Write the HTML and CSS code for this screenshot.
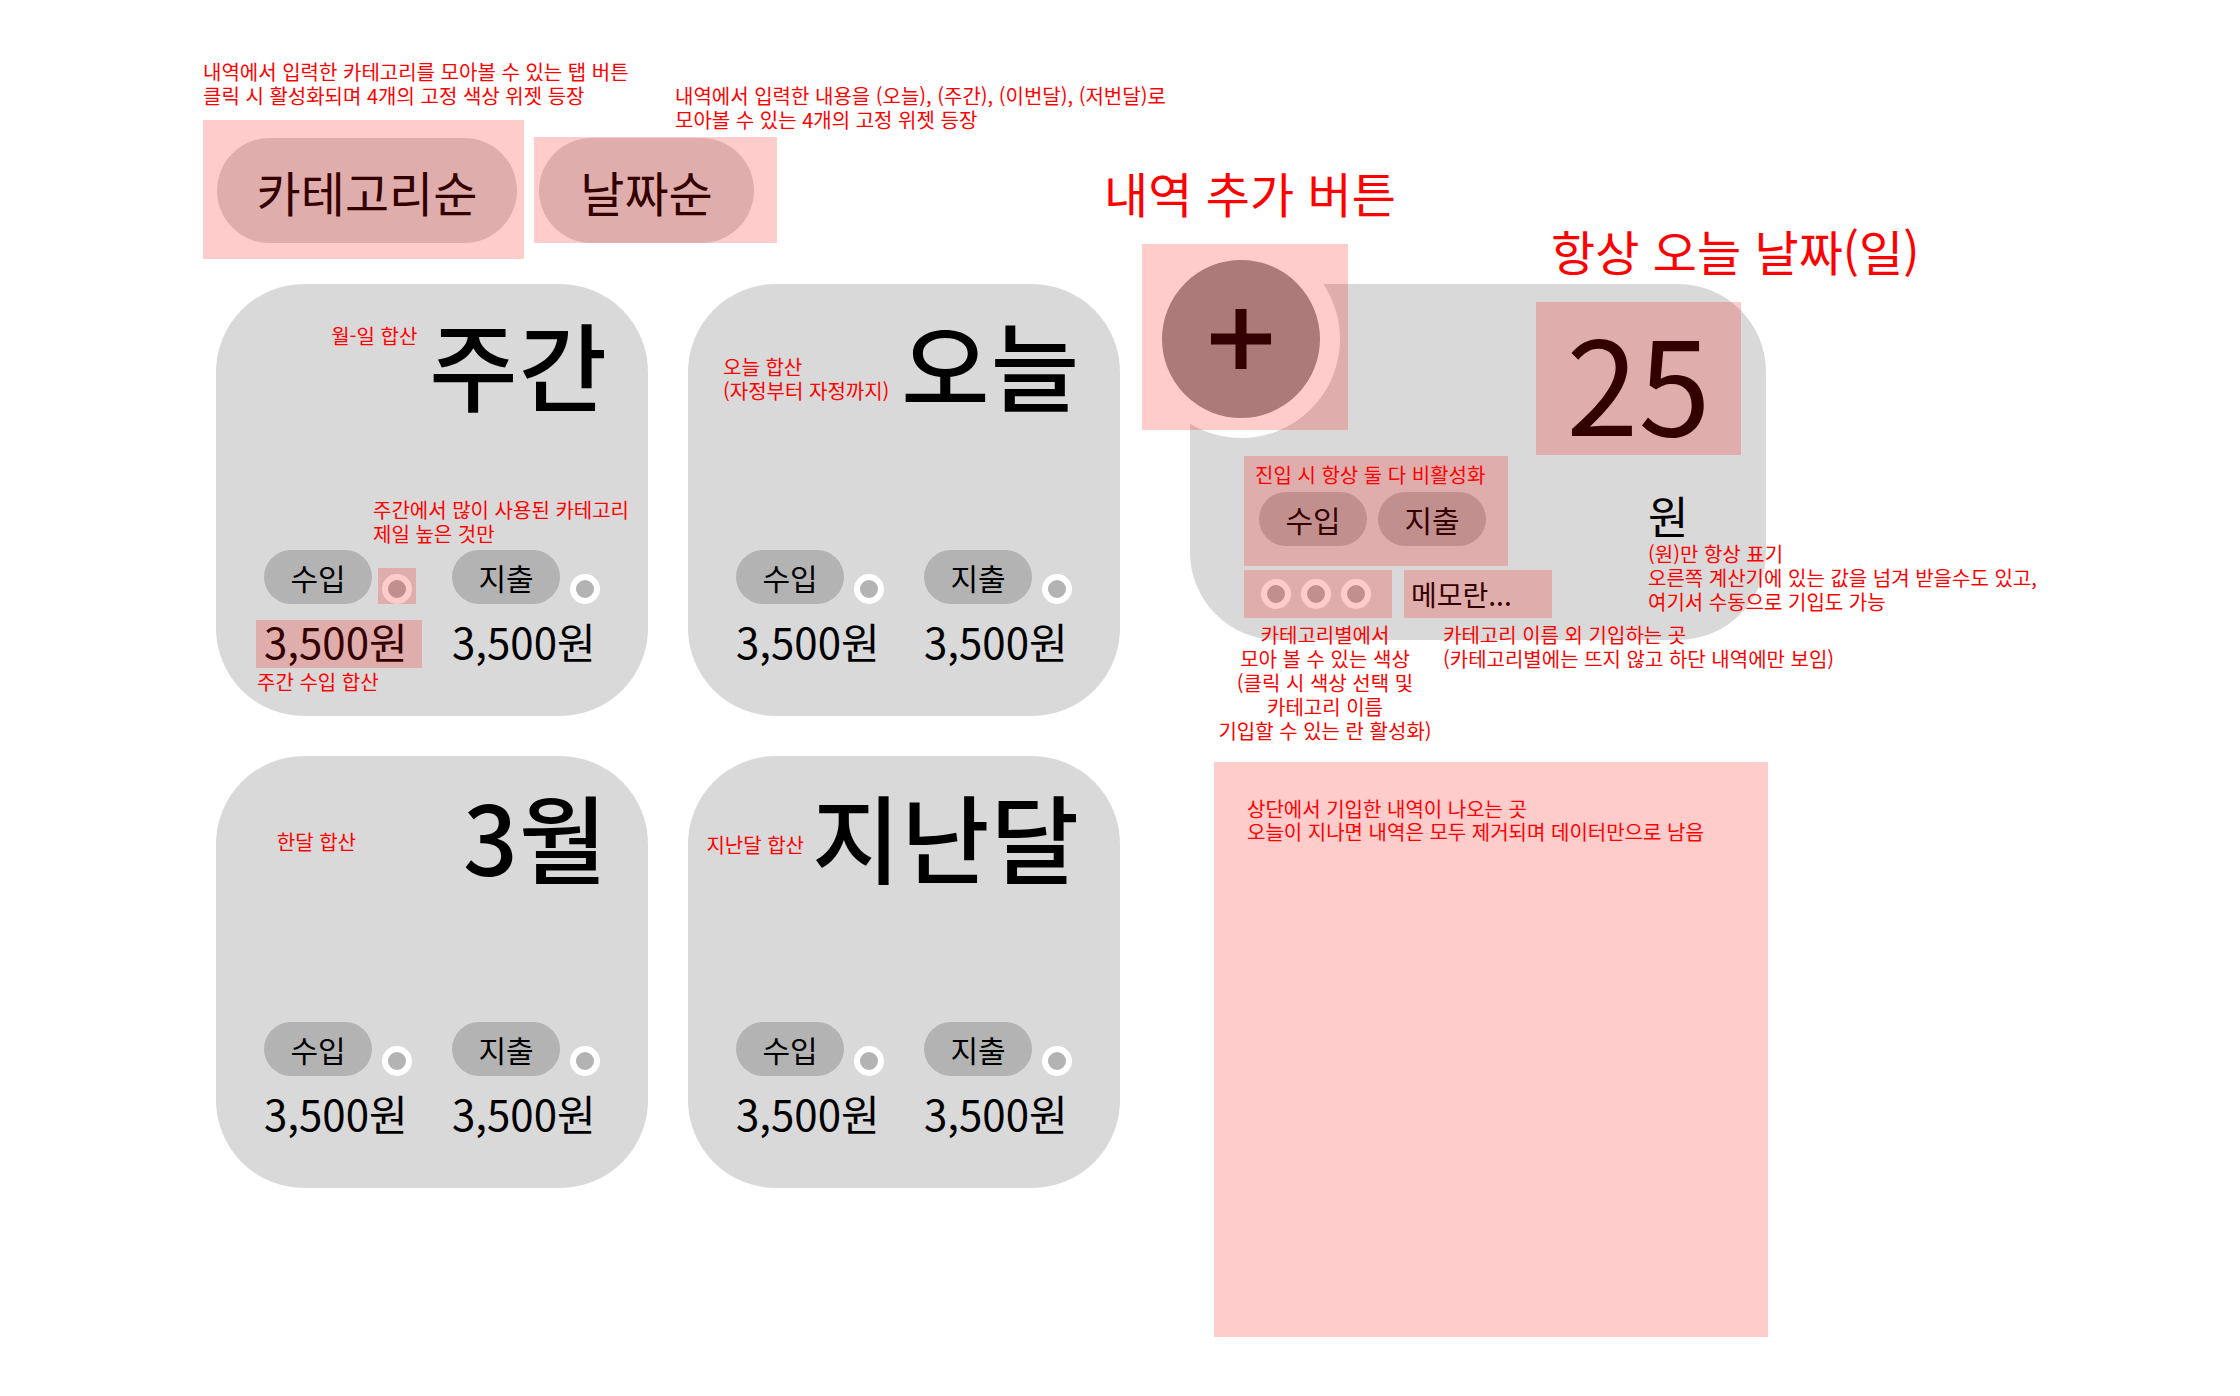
FILE: index.html
```html
<!DOCTYPE html>
<html lang="ko">
<head>
    <meta charset="UTF-8">
    <meta name="viewport" content="width=device-width, initial-scale=1.0">
    <title>가계부 - 화면 설계</title>
    <link rel="stylesheet" href="styles.css">
</head>
<body>
<div class="board">

    <section class="summary">
        <p class="note">내역에서 입력한 카테고리를 모아볼 수 있는 탭 버튼<br>클릭 시 활성화되며 4개의 고정 색상 위젯 등장</p>

        <div class="tabs">
            <button class="tab tab-category">카테고리순</button>
            <button class="tab tab-date">날짜순</button>
            <p class="note note-dates">내역에서 입력한 내용을 (오늘), (주간), (이번달), (저번달)로<br>모아볼 수 있는 4개의 고정 위젯 등장</p>
        </div>

        <div class="cards">
            <div class="card card-week">
                <div class="card-head">
                    <p class="note">월-일 합산</p>
                    <h2 class="card-title">주간</h2>
                </div>
                <div class="stats">
                    <p class="note note-top">주간에서 많이 사용된 카테고리<br>제일 높은 것만</p>
                    <div class="stat">
                        <div class="stat-top"><span class="pill">수입</span><span class="dot marked"></span></div>
                        <div class="amount marked">3,500원<span class="note note-sum">주간 수입 합산</span></div>
                    </div>
                    <div class="stat">
                        <div class="stat-top"><span class="pill">지출</span><span class="dot"></span></div>
                        <div class="amount">3,500원</div>
                    </div>
                </div>
            </div>

            <div class="card card-today">
                <div class="card-head">
                    <p class="note">오늘 합산<br>(자정부터 자정까지)</p>
                    <h2 class="card-title">오늘</h2>
                </div>
                <div class="stats">
                    <div class="stat">
                        <div class="stat-top"><span class="pill">수입</span><span class="dot"></span></div>
                        <div class="amount">3,500원</div>
                    </div>
                    <div class="stat">
                        <div class="stat-top"><span class="pill">지출</span><span class="dot"></span></div>
                        <div class="amount">3,500원</div>
                    </div>
                </div>
            </div>

            <div class="card card-month">
                <div class="card-head">
                    <p class="note">한달 합산</p>
                    <h2 class="card-title">3월</h2>
                </div>
                <div class="stats">
                    <div class="stat">
                        <div class="stat-top"><span class="pill">수입</span><span class="dot"></span></div>
                        <div class="amount">3,500원</div>
                    </div>
                    <div class="stat">
                        <div class="stat-top"><span class="pill">지출</span><span class="dot"></span></div>
                        <div class="amount">3,500원</div>
                    </div>
                </div>
            </div>

            <div class="card card-last">
                <div class="card-head">
                    <p class="note">지난달 합산</p>
                    <h2 class="card-title">지난달</h2>
                </div>
                <div class="stats">
                    <div class="stat">
                        <div class="stat-top"><span class="pill">수입</span><span class="dot"></span></div>
                        <div class="amount">3,500원</div>
                    </div>
                    <div class="stat">
                        <div class="stat-top"><span class="pill">지출</span><span class="dot"></span></div>
                        <div class="amount">3,500원</div>
                    </div>
                </div>
            </div>
        </div>
    </section>

    <section class="entry-area">
        <div class="callouts">
            <h2 class="callout callout-add">내역 추가 버튼</h2>
            <h2 class="callout callout-date">항상 오늘 날짜(일)</h2>
        </div>

        <div class="today-card">
            <div class="add-zone">
                <button class="add-btn" aria-label="내역 추가">
                    <svg width="60" height="60" viewBox="0 0 60 60">
                        <rect x="24.5" y="0" width="11" height="60" fill="#000"/>
                        <rect x="0" y="24.5" width="60" height="11" fill="#000"/>
                    </svg>
                </button>
            </div>

            <div class="date-box">25</div>

            <div class="today-row">
                <div class="entry">
                    <div class="toggle-box">
                        <p class="note">진입 시 항상 둘 다 비활성화</p>
                        <div class="toggle-pills">
                            <span class="pill">수입</span>
                            <span class="pill">지출</span>
                        </div>
                    </div>
                    <div class="entry-bottom">
                        <div class="color-box">
                            <span class="dot"></span><span class="dot"></span><span class="dot"></span>
                            <p class="note note-colors">카테고리별에서<br>모아 볼 수 있는 색상<br>(클릭 시 색상 선택 및<br>카테고리 이름<br>기입할 수 있는 란 활성화)</p>
                        </div>
                        <div class="memo-box">
                            메모란...
                            <p class="note note-memo">카테고리 이름 외 기입하는 곳<br>(카테고리별에는 뜨지 않고 하단 내역에만 보임)</p>
                        </div>
                    </div>
                </div>
                <div class="won-col">
                    <div class="won">원</div>
                    <p class="note">(원)만 항상 표기<br>오른쪽 계산기에 있는 값을 넘겨 받을수도 있고,<br>여기서 수동으로 기입도 가능</p>
                </div>
            </div>
        </div>

        <div class="history">
            <p class="note">상단에서 기입한 내역이 나오는 곳<br>오늘이 지나면 내역은 모두 제거되며 데이터만으로 남음</p>
        </div>
    </section>

</div>
</body>
</html>
```

FILE: styles.css
```css
body {
    margin: 0;
    background-color: #fff;
    color: #000;
    font-family: "Noto Sans CJK KR", sans-serif;
}
.board {
    display: flex;
    align-items: flex-start;
    padding: 60px 0 0 203px;
}
.note {
    margin: 0;
    color: #f00;
    font-size: 20px;
    line-height: 24px;
    white-space: nowrap;
}

/* 분홍 표시 영역 (설명용) */
.marked,
.tab,
.date-box,
.toggle-box,
.color-box,
.memo-box,
.add-zone {
    position: relative;
}
.marked::after,
.tab::after,
.date-box::after,
.toggle-box::after,
.color-box::after,
.memo-box::after,
.add-zone::after {
    content: "";
    position: absolute;
    inset: 0;
    background-color: rgba(255, 0, 0, 0.2);
    pointer-events: none;
}

/* 왼쪽: 탭 + 위젯 */
.summary {
    width: 939px;
    flex-shrink: 0;
}
.tabs {
    position: relative;
    display: flex;
    gap: 22px;
    margin: 30px 0 0 14px;
}
.tab {
    height: 105px;
    padding: 0;
    border: none;
    border-radius: 53px;
    background-color: #d9d9d9;
    color: #000;
    font-family: inherit;
    font-size: 48px;
}
.tab-category {
    width: 300px;
}
.tab-category::after {
    inset: -18px -7px -16px -14px;
}
.tab-date {
    width: 215px;
}
.tab-date::after {
    inset: -1px -23px 0 -5px;
}
.note-dates {
    position: absolute;
    left: 458px;
    top: -54px;
}
.cards {
    display: grid;
    grid-template-columns: repeat(2, 432px);
    grid-auto-rows: 432px;
    gap: 40px;
    margin: 41px 0 0 13px;
}
.card {
    display: flex;
    flex-direction: column;
    box-sizing: border-box;
    padding: 31px 40px 51px 48px;
    border-radius: 88px;
    background-color: #d9d9d9;
}
.card-head {
    display: flex;
    justify-content: flex-end;
    align-items: flex-start;
    gap: 12px;
}
.card-title {
    margin: 0;
    font-size: 96px;
    font-weight: 500;
    line-height: 96px;
    letter-spacing: 1px;
    white-space: nowrap;
}
.card-week .card-head .note { margin-top: 9px; }
.card-today .card-head .note { margin-top: 40px; }
.card-month .card-head .note { margin-top: 43px; margin-right: 95px; }
.card-last .card-head .note { margin-top: 46px; margin-right: -4px; }

.stats {
    position: relative;
    display: flex;
    gap: 40px;
    margin-top: auto;
}
.stat {
    width: 148px;
}
.stat-top {
    display: flex;
    align-items: flex-end;
    gap: 10px;
}
.pill {
    display: inline-flex;
    align-items: center;
    justify-content: center;
    width: 108px;
    height: 54px;
    border-radius: 27px;
    background-color: #b3b3b3;
    font-size: 30px;
}
.dot {
    display: inline-block;
    width: 30px;
    height: 30px;
    box-sizing: border-box;
    border: 6px solid #fff;
    border-radius: 50%;
    background-color: #b3b3b3;
}
.dot.marked::after {
    inset: -12px -10px -6px -10px;
}
.amount {
    margin-top: 13px;
    font-size: 42px;
    line-height: 48px;
    white-space: nowrap;
}
.amount.marked::after {
    inset: 3px -10px -3px -8px;
}
.note-top {
    position: absolute;
    left: 109px;
    bottom: calc(100% + 4px);
}
.note-sum {
    position: absolute;
    left: -7px;
    top: 53px;
}

/* 오른쪽: 내역 추가 */
.entry-area {
    width: 780px;
    flex-shrink: 0;
}
.callouts {
    display: grid;
    grid-template-columns: 409px auto;
    margin-top: 106px;
}
.callout {
    margin: 0;
    color: #f00;
    font-size: 48px;
    font-weight: 400;
    line-height: 53px;
    white-space: nowrap;
}
.callout-add {
    margin-left: -38px;
}
.callout-date {
    margin-top: 58px;
}
.today-card {
    position: relative;
    display: flex;
    flex-direction: column;
    width: 576px;
    height: 356px;
    box-sizing: border-box;
    margin: 7px 0 0 48px;
    padding: 18px 25px 0 54px;
    border-radius: 88px;
    background-color: #d9d9d9;
}
.add-zone {
    position: absolute;
    left: -48px;
    top: -40px;
    width: 206px;
    height: 186px;
    z-index: 1;
}
.add-btn {
    display: flex;
    align-items: center;
    justify-content: center;
    width: 198px;
    height: 198px;
    box-sizing: border-box;
    margin-top: -4px;
    padding: 0;
    border: 20px solid #fff;
    border-radius: 50%;
    background-color: #999;
    cursor: pointer;
}
.date-box {
    align-self: flex-end;
    display: flex;
    align-items: center;
    justify-content: center;
    width: 205px;
    height: 153px;
    font-size: 130px;
    line-height: 1;
}
.today-row {
    display: flex;
    margin-top: 1px;
}
.entry {
    width: 308px;
    flex-shrink: 0;
}
.toggle-box {
    width: 264px;
    height: 110px;
    box-sizing: border-box;
    padding: 7px 0 0 11px;
}
.toggle-pills {
    display: flex;
    gap: 11px;
    margin: 5px 0 0 4px;
}
.entry-bottom {
    display: flex;
    gap: 12px;
    margin-top: 4px;
}
.color-box {
    display: flex;
    align-items: center;
    gap: 10px;
    width: 148px;
    height: 48px;
    box-sizing: border-box;
    padding-left: 17px;
}
.note-colors {
    position: absolute;
    left: -39px;
    top: calc(100% + 5px);
    width: 240px;
    text-align: center;
}
.memo-box {
    display: flex;
    align-items: center;
    width: 148px;
    height: 48px;
    box-sizing: border-box;
    padding-left: 7px;
    font-size: 28px;
}
.note-memo {
    position: absolute;
    left: 39px;
    top: calc(100% + 5px);
}
.won-col {
    margin-left: 96px;
    padding-top: 35px;
}
.won {
    font-size: 44px;
    line-height: 48px;
}
.won-col .note {
    margin-top: 3px;
}
.history {
    width: 554px;
    height: 575px;
    box-sizing: border-box;
    margin: 122px 0 0 72px;
    padding: 35px 33px;
    background-color: rgba(255, 0, 0, 0.2);
}
.history .note {
    line-height: 23px;
}
```
